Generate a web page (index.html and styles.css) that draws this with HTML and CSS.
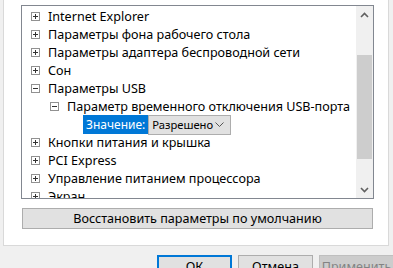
FILE: index.html
```html
<!DOCTYPE html>
<html lang="ru">
<head>
	<meta charset="UTF-8">
	<title>Электропитание</title>
	<link rel="stylesheet" href="styles.css">
</head>
<body>

<div class="panel">
	<div class="listbox">
		<div class="tree">
			<div class="row lvl0"><span class="box plus"></span>Internet Explorer</div>
			<div class="row lvl0"><span class="box plus"></span>Параметры фона рабочего стола</div>
			<div class="row lvl0"><span class="box plus"></span>Параметры адаптера беспроводной сети</div>
			<div class="row lvl0"><span class="box plus"></span>Сон</div>
			<div class="row lvl0"><span class="box minus"></span>Параметры USB</div>
			<div class="row lvl1"><span class="box minus"></span>Параметр временного отключения USB-порта</div>
			<div class="row lvl2">
				<span class="sel">Значение:</span>
				<span class="combo">Разрешено
					<svg class="chev" width="9" height="5" viewBox="0 0 9 5"><path d="M0.5 0.5 L4.5 4.5 L8.5 0.5" fill="none" stroke="#555" stroke-width="1"/></svg>
				</span>
			</div>
			<div class="row lvl0"><span class="box plus"></span>Кнопки питания и крышка</div>
			<div class="row lvl0"><span class="box plus"></span>PCI Express</div>
			<div class="row lvl0"><span class="box plus"></span>Управление питанием процессора</div>
			<div class="row lvl0"><span class="box plus"></span>Экран</div>
		</div>
		<div class="scrollbar">
			<div class="arrow">
				<svg width="9" height="6" viewBox="0 0 9 6"><path d="M1 5 L4.5 1.5 L8 5" fill="none" stroke="#606060" stroke-width="1.6"/></svg>
			</div>
			<div class="track"><div class="thumb"></div></div>
			<div class="arrow">
				<svg width="9" height="6" viewBox="0 0 9 6"><path d="M1 1 L4.5 4.5 L8 1" fill="none" stroke="#606060" stroke-width="1.6"/></svg>
			</div>
		</div>
	</div>
	<div class="btn restore">Восстановить параметры по умолчанию</div>
</div>

<div class="actions">
	<div class="btn dlg ok">ОК</div>
	<div class="btn dlg">Отмена</div>
	<div class="btn dlg disabled">Применить</div>
</div>

</body>
</html>
```

FILE: styles.css
```css
*{
	margin: 0;
	padding: 0;
	box-sizing: border-box;
}
body{
	background: #f0f0f0;
	font-family: "Noto Sans", "Liberation Sans", sans-serif;
	font-size: 12.6px;
	color: #000;
	width: 393px;
	height: 268px;
	overflow: hidden;
}

.panel{
	margin-left: 3px;
	width: 386px;
	height: 246px;
	background: #fff;
	border: 1px solid #d9d9d9;
	border-top: none;
	padding: 5px 0 0 17px;
}

.listbox{
	width: 353px;
	height: 194px;
	border: 1px solid #828790;
	display: flex;
}
.tree{
	flex: 1;
	overflow: hidden;
	padding-top: 1px;
}
.row{
	height: 18px;
	display: flex;
	align-items: center;
	white-space: nowrap;
}
.lvl0{
	padding-left: 9px;
}
.lvl1{
	padding-left: 28px;
}
.lvl2{
	padding-left: 61px;
	font-size: 12px;
}

.box{
	width: 9px;
	height: 9px;
	border: 1px solid #919191;
	margin-right: 8px;
	position: relative;
	flex: none;
}
.box:before,
.plus:after{
	content: "";
	position: absolute;
	background: #333;
}
.box:before{
	left: 1px;
	top: 3px;
	width: 5px;
	height: 1px;
}
.plus:after{
	left: 3px;
	top: 1px;
	width: 1px;
	height: 5px;
}

.sel{
	flex: none;
	background: #0078d7;
	color: #fff;
	height: 19px;
	line-height: 19px;
	padding: 0 3px;
}
.combo{
	flex: none;
	width: 83px;
	height: 20px;
	background: #e1e1e1;
	border: 1px solid #adadad;
	display: flex;
	align-items: center;
	justify-content: space-between;
	padding: 0 6px 0 3px;
	margin-top: 1px;
	font-size: 11.2px;
	overflow: hidden;
}
.chev{
	flex: none;
}

.scrollbar{
	width: 17px;
	background: #f0f0f0;
	display: flex;
	flex-direction: column;
}
.arrow{
	height: 17px;
	display: flex;
	align-items: center;
	justify-content: center;
}
.track{
	flex: 1;
	padding-top: 32px;
}
.thumb{
	height: 104px;
	margin: 0 1px;
	background: #cdcdcd;
}

.btn{
	background: #e1e1e1;
	border: 1px solid #adadad;
	display: flex;
	align-items: center;
	justify-content: center;
}
.restore{
	margin: 9px 0 0 1px;
	width: 351px;
	height: 21px;
}

.actions{
	display: flex;
	gap: 6px;
	padding: 9px 0 0 157px;
}
.dlg{
	width: 75px;
	height: 23px;
	flex: none;
}
.ok{
	border: 2px solid #0078d7;
}
.disabled{
	background: #cccccc;
	border-color: #bfbfbf;
	color: #838383;
}
```
